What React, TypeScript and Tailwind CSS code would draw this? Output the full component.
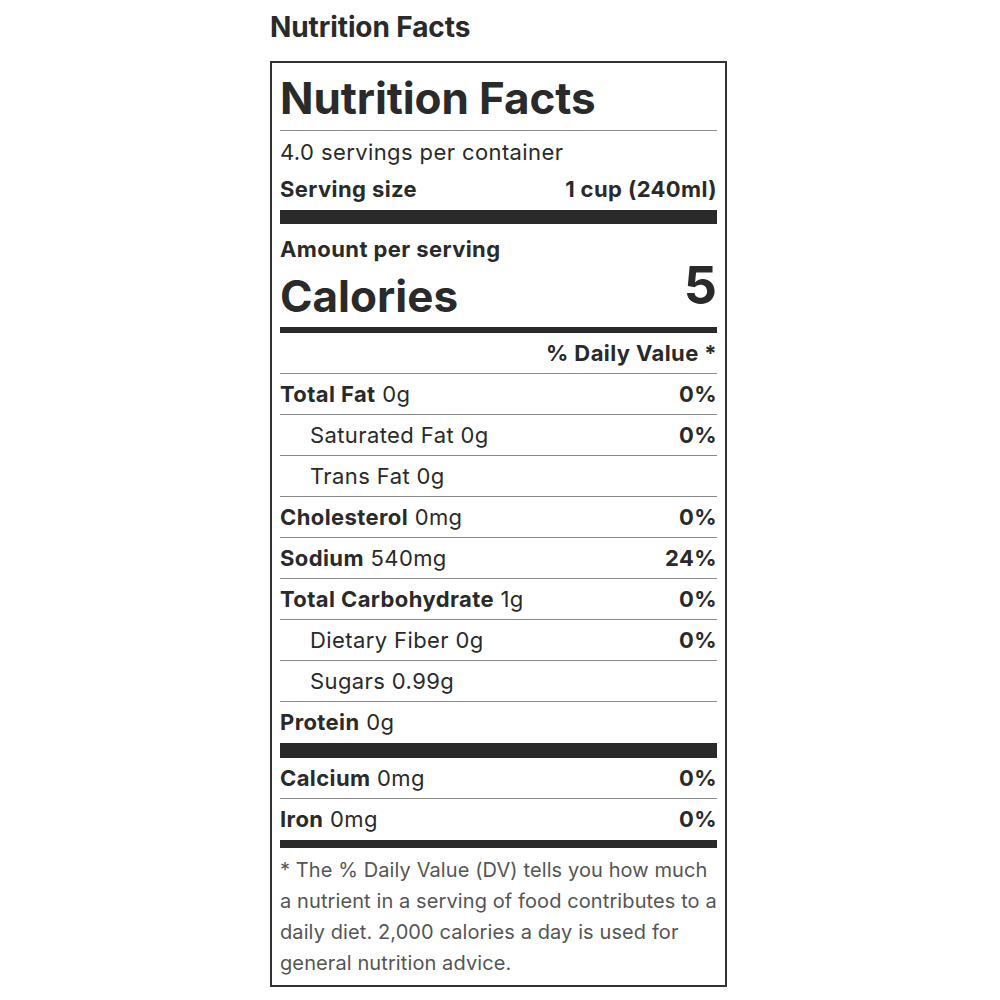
const rows = [
  { label: "Total Fat", amount: "0g", dv: "0%", bold: true },
  { label: "Saturated Fat", amount: "0g", dv: "0%", indent: true },
  { label: "Trans Fat", amount: "0g", dv: "", indent: true },
  { label: "Cholesterol", amount: "0mg", dv: "0%", bold: true },
  { label: "Sodium", amount: "540mg", dv: "24%", bold: true },
  { label: "Total Carbohydrate", amount: "1g", dv: "0%", bold: true },
  { label: "Dietary Fiber", amount: "0g", dv: "0%", indent: true },
  { label: "Sugars", amount: "0.99g", dv: "", indent: true },
];

const minerals = [
  { label: "Calcium", amount: "0mg", dv: "0%" },
  { label: "Iron", amount: "0mg", dv: "0%" },
];

type Row = { label: string; amount: string; dv: string; bold?: boolean; indent?: boolean };

const NutrientRow = ({ row, last }: { row: Row; last?: boolean }) => {
  return (
    <div
      className={`flex items-center justify-between h-[41px] text-[22px] tracking-[0.4px] ${
        last ? "" : "border-b border-[#8a8a8a]"
      } ${row.indent ? "pl-[30px]" : ""}`}
    >
      <span>
        <span className={row.bold ? "font-bold" : "font-normal"}>{row.label}</span>{" "}
        <span className="font-normal">{row.amount}</span>
      </span>
      <span className="font-bold">{row.dv}</span>
    </div>
  );
};

const App = () => {
  return (
    <div className="min-h-screen bg-white font-['Inter',sans-serif] text-[#2a2a2a]">
      <div className="flex justify-center pr-[3px]">
        <div className="w-[457px]">
          <h2 className="text-[28px] font-bold leading-[34px] pt-[10px] tracking-[-0.1px]">
            Nutrition Facts
          </h2>
          <div className="mt-[17px] border-2 border-[#333] px-2 pb-[6px]">
            <h1 className="text-[44px] font-bold leading-[63px] pt-[4px] tracking-[-0.1px] border-b border-[#8a8a8a]">
              Nutrition Facts
            </h1>
            <p className="text-[22px] tracking-[0.4px] leading-[40px] pt-[1px] font-normal">
              4.0 servings per container
            </p>
            <div className="flex justify-between items-center text-[22px] tracking-[0.4px] font-bold leading-[34px]">
              <span>Serving size</span>
              <span>1 cup (240ml)</span>
            </div>
            <div className="h-[14px] bg-[#2a2a2a] mt-[4px]" />
            <p className="text-[22px] tracking-[0.4px] font-bold leading-[24px] pt-[13px]">
              Amount per serving
            </p>
            <div className="flex justify-between items-end h-[66px] pb-[9px]">
              <span className="text-[44px] font-bold leading-none">Calories</span>
              <span className="text-[52px] font-bold leading-none mb-[6px]">5</span>
            </div>
            <div className="h-[6px] bg-[#2a2a2a]" />
            <div className="flex justify-end items-center h-[41px] border-b border-[#8a8a8a] text-[22px] tracking-[0.4px] font-bold">
              % Daily Value *
            </div>
            {rows.map((r) => (
              <NutrientRow key={r.label} row={r} />
            ))}
            <NutrientRow row={{ label: "Protein", amount: "0g", dv: "", bold: true }} last />
            <div className="h-[15px] bg-[#2a2a2a]" />
            {minerals.map((r, i) => (
              <NutrientRow key={r.label} row={{ ...r, bold: true }} last={i === minerals.length - 1} />
            ))}
            <div className="h-[8px] bg-[#2a2a2a]" />
            <p className="text-[20px] tracking-[0.1px] leading-[31px] text-[#555] pt-[7px] whitespace-nowrap">
              * The % Daily Value (DV) tells you how much
              <br />
              a nutrient in a serving of food contributes to a
              <br />
              daily diet. 2,000 calories a day is used for
              <br />
              general nutrition advice.
            </p>
          </div>
        </div>
      </div>
    </div>
  );
};

export default App;
